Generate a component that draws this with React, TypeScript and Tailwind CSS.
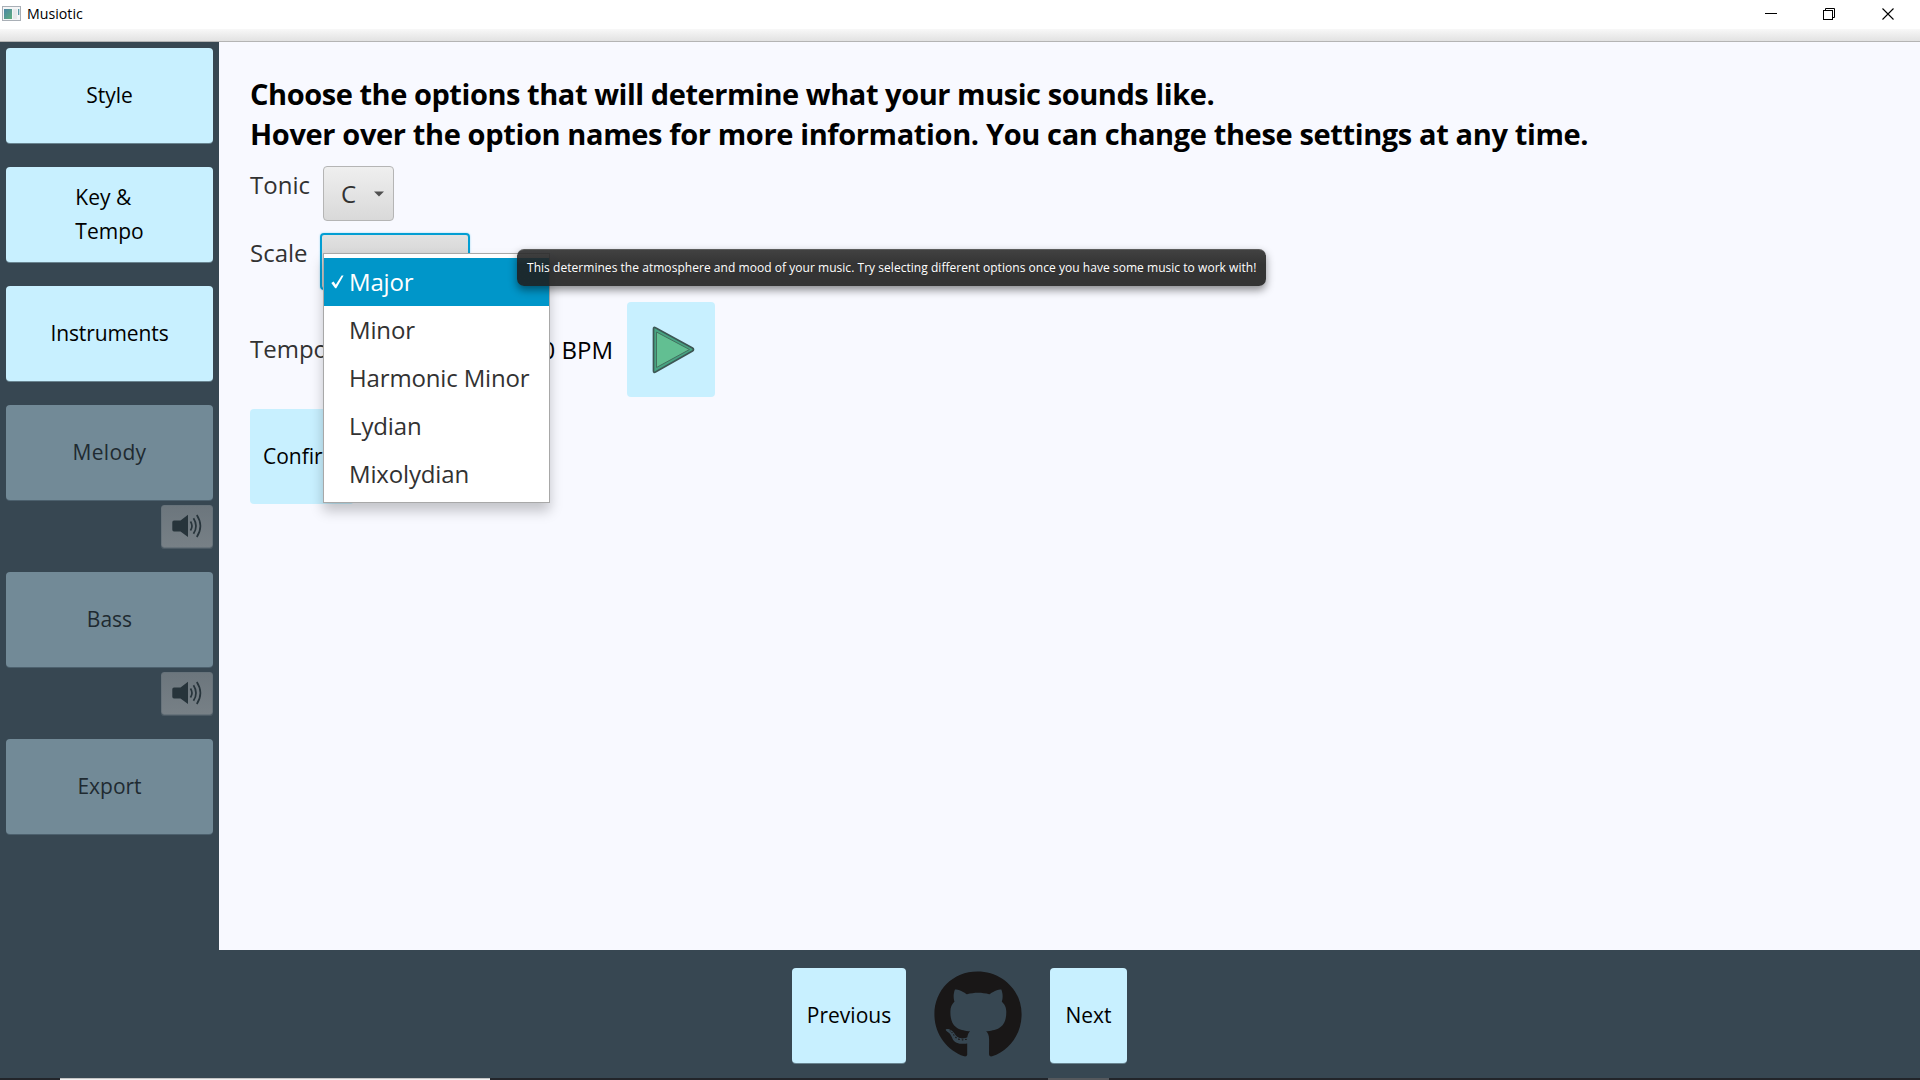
import type { ReactNode } from "react";
import { FaGithub } from "react-icons/fa";

function TitleBar() {
  return (
    <header className="h-[42px] shrink-0">
      <div className="flex h-[29px] items-start bg-white">
        <svg className="ml-[2px] mt-[6px]" width="19" height="15" viewBox="0 0 19 15">
          <defs>
            <linearGradient id="appIcon" x1="0" y1="0" x2="1" y2="1">
              <stop offset="0" stopColor="#4a86a6" />
              <stop offset="1" stopColor="#5fae7c" />
            </linearGradient>
          </defs>
          <rect x="0.5" y="0.5" width="18" height="14" fill="#f4f5f6" stroke="#a9afb6" />
          <rect x="2" y="3" width="8" height="10" fill="url(#appIcon)" />
          <rect x="11" y="3" width="4" height="10" fill="#e6e8ea" />
          <rect x="16" y="3" width="1.3" height="6" fill="#5a9aa8" />
        </svg>
        <span className="ml-[6px] mt-[2px] text-[14.2px] leading-6 text-black">Musiotic</span>
        <div className="ml-auto mr-[24px] mt-[7px] flex gap-[45px]">
          <svg width="14" height="14" viewBox="0 0 14 14">
            <path d="M1 6.5H13" stroke="#000" />
          </svg>
          <svg width="14" height="14" viewBox="0 0 14 14" fill="none" stroke="#000">
            <rect x="0.5" y="3.5" width="9" height="9" />
            <path d="M2.5 3.5V1.5H11.5V10.5H9.5" />
          </svg>
          <svg width="14" height="14" viewBox="0 0 14 14" stroke="#000" strokeWidth="1.1">
            <path d="M0.500 1.500L11.500 12.500M11.500 1.500L0.500 12.500" />
          </svg>
        </div>
      </div>
      <div className="h-[13px] border-b border-[#b4b4b4] bg-linear-to-b from-[#f8f8f8] to-[#e2e2e2]" />
    </header>
  );
}

function NavButton({ children, disabled }: { children: ReactNode; disabled?: boolean }) {
  return (
    <button
      disabled={disabled}
      className={
        disabled
          ? "flex h-[95px] w-[207px] items-center justify-center rounded-[4px] bg-[#728a97] pb-[2px] text-[21px] leading-[34px] text-[#1f2a31] shadow-[0_1px_0_#4c606d]"
          : "flex h-[95px] w-[207px] items-center justify-center rounded-[4px] bg-[#c8f0ff] pb-[2px] text-[21px] leading-[34px] text-black shadow-[0_1px_0_#698490]"
      }
    >
      {children}
    </button>
  );
}

function MuteButton() {
  return (
    <button
      disabled
      className="mt-[5px] flex h-[43px] w-[52px] items-center justify-center self-end rounded-[3px] border border-[#66727a] bg-linear-to-b from-[#6c767d] to-[#778086] pb-[2px] shadow-[0_1px_0_#4c5a64]"
    >
      <svg width="30" height="24" viewBox="0 0 30 24">
        <path d="M2 6.500H8.500L16 0.800V23L8.500 17.500H2Q0.300 17.500 0.300 15.800V8.200Q0.300 6.500 2 6.500Z" fill="#27343b" />
        <g fill="none" stroke="#27343b" strokeWidth="1.7">
          <path d="M18.500 7.500Q21.500 12 18.500 16.500" />
          <path d="M21.500 4.200Q26.500 12 21.500 19.800" />
          <path d="M24.800 1Q32 12 24.800 23" />
        </g>
      </svg>
    </button>
  );
}

function Sidebar() {
  return (
    <nav className="flex w-[219px] shrink-0 flex-col gap-6 pl-[6px] pr-[6px] pt-[6px]">
      <NavButton>Style</NavButton>
      <NavButton>
        <span className="text-left">
          Key &amp;
          <br />
          Tempo
        </span>
      </NavButton>
      <NavButton>
        <span className="tracking-[-0.1px]">Instruments</span>
      </NavButton>
      <div className="flex flex-col">
        <NavButton disabled>
          <span className="tracking-[0.3px]">Melody</span>
        </NavButton>
        <MuteButton />
      </div>
      <div className="flex flex-col">
        <NavButton disabled>Bass</NavButton>
        <MuteButton />
      </div>
      <NavButton disabled>Export</NavButton>
    </nav>
  );
}

const SCALES = ["Major", "Minor", "Harmonic Minor", "Lydian", "Mixolydian"];

function ScaleMenu() {
  return (
    <ul className="absolute left-[3px] top-[20px] z-10 h-[250px] w-[227px] border border-[#a8a8a8] bg-white py-[4px] shadow-[0_8px_12px_rgba(0,0,0,0.22)]">
      {SCALES.map((name, i) => (
        <li
          key={name}
          className={
            i === 0
              ? "flex h-12 items-center bg-[#0096c9] text-[24px] tracking-[-0.15px] text-white"
              : "flex h-12 items-center text-[24px] tracking-[-0.15px] text-[#323232]"
          }
        >
          <span className="flex w-[25px] shrink-0 pl-[7px]">
            {i === 0 && (
              <svg width="13" height="14" viewBox="0 0 13 14">
                <path d="M0.300 8L2.600 6.600L4.800 9.800L10.600 0.600L12.600 0.600L5.300 13.200H4.200Z" fill="#fff" />
              </svg>
            )}
          </span>
          <span className="whitespace-nowrap">{name}</span>
        </li>
      ))}
    </ul>
  );
}

function Tooltip() {
  return (
    <div className="absolute left-[197px] top-[16px] z-20 flex h-[37px] w-[749px] items-center whitespace-nowrap rounded-[7px] border-t border-white/20 bg-linear-to-b from-[rgba(45,45,45,0.9)] to-[rgba(30,30,30,0.9)] to-40% pl-[10px] text-[12px] tracking-[0.04px] text-white shadow-[0_4px_9px_rgba(0,0,0,0.45)]">
      This determines the atmosphere and mood of your music. Try selecting different options once you have some
      music to work with!
    </div>
  );
}

function Options() {
  return (
    <main className="flex grow flex-col gap-3 bg-[#f8f9ff] pl-[31px] pt-8">
      <h1 className="text-[29px] font-bold leading-10 text-black">
        <span className="block tracking-[-0.445px]">
          Choose the options that will determine what your music sounds like.
        </span>
        <span className="block tracking-[-0.365px]">
          Hover over the option names for more information. You can change these settings at any time.
        </span>
      </h1>

      <div className="flex h-[55px]">
        <span className="mt-[2px] w-[73px] text-[24px] leading-[34px] text-[#323232]">Tonic</span>
        <button className="flex h-[55px] w-[71px] items-center rounded-[4px] border border-[#b5b5b5] bg-linear-to-b from-[#efefef] to-[#d9d9d9] pl-[17px] text-[24px] text-[#323232]">
          C
          <svg className="ml-[18px]" width="10" height="6" viewBox="0 0 10 6">
            <path d="M0 0.500H10L5 5.500Z" fill="#505050" />
          </svg>
        </button>
      </div>

      <div className="flex h-[57px]">
        <span className="mt-[3px] w-[70px] text-[24px] leading-[34px] text-[#323232]">Scale</span>
        <div className="relative h-[57px] w-[150px] rounded-[4px] border-2 border-[#039ed3] bg-linear-to-b from-[#e2e2e2] to-[#c4c4c4] shadow-[0_0_2px_#8fd3ee]">
          <div className="absolute -left-[2px] -top-[2px]">
            <ScaleMenu />
            <Tooltip />
          </div>
        </div>
      </div>

      <div className="flex h-[95px] items-center">
        <span className="w-[210px] pb-[2px] text-[24px] text-[#323232]">Tempo</span>
        <span className="w-[153px] text-right text-[24px] text-black">120 BPM</span>
        <button className="ml-[14px] flex h-[95px] w-[88px] items-center justify-center rounded-[4px] bg-[#c8f0ff] pl-[3px]">
          <svg width="44" height="48" viewBox="0 0 44 48">
            <path d="M2.500 2.800Q2.500 0.800 4.500 1.800L41.500 22Q43.500 23.500 41.500 25L4.500 46Q2.500 47 2.500 45Z" fill="#46a382" stroke="#3d5754" strokeWidth="1.700" />
            <path d="M5.500 6L38.500 23.500L5.500 41.500Z" fill="#62bf92" stroke="#43705f" strokeWidth="1" />
          </svg>
        </button>
      </div>

      <button className="flex h-[95px] w-[104px] items-center rounded-[4px] bg-[#c8f0ff] pl-[13px] text-[21px] text-black">
        Confirm
      </button>
    </main>
  );
}

function Footer() {
  return (
    <footer className="flex h-[128px] shrink-0 items-center pl-[792px] pt-[2px]">
      <button className="h-[95px] w-[114px] rounded-[4px] bg-[#c8f0ff] pt-[1px] text-[21px] text-black shadow-[0_1px_0_#698490]">
        Previous
      </button>
      <FaGithub className="ml-7 h-[90px] w-[88px] text-[#191717]" />
      <button className="ml-7 h-[95px] w-[77px] rounded-[4px] bg-[#c8f0ff] pt-[1px] text-[21px] text-black shadow-[0_1px_0_#698490]">
        Next
      </button>
    </footer>
  );
}

export default function App() {
  return (
    <div className="flex h-[1080px] w-[1920px] flex-col overflow-hidden bg-[#374752] font-['Open_Sans','Noto_Sans',sans-serif]">
      <TitleBar />
      <div className="flex h-[908px] shrink-0">
        <Sidebar />
        <Options />
      </div>
      <Footer />
      <div className="flex h-[2px] shrink-0 bg-[#22252a]">
        <div className="ml-[60px] w-[430px] border-t border-[#c4c4c4] bg-[#f2f2f2]" />
        <div className="ml-[558px] w-[61px] bg-[#55585c]" />
      </div>
    </div>
  );
}
